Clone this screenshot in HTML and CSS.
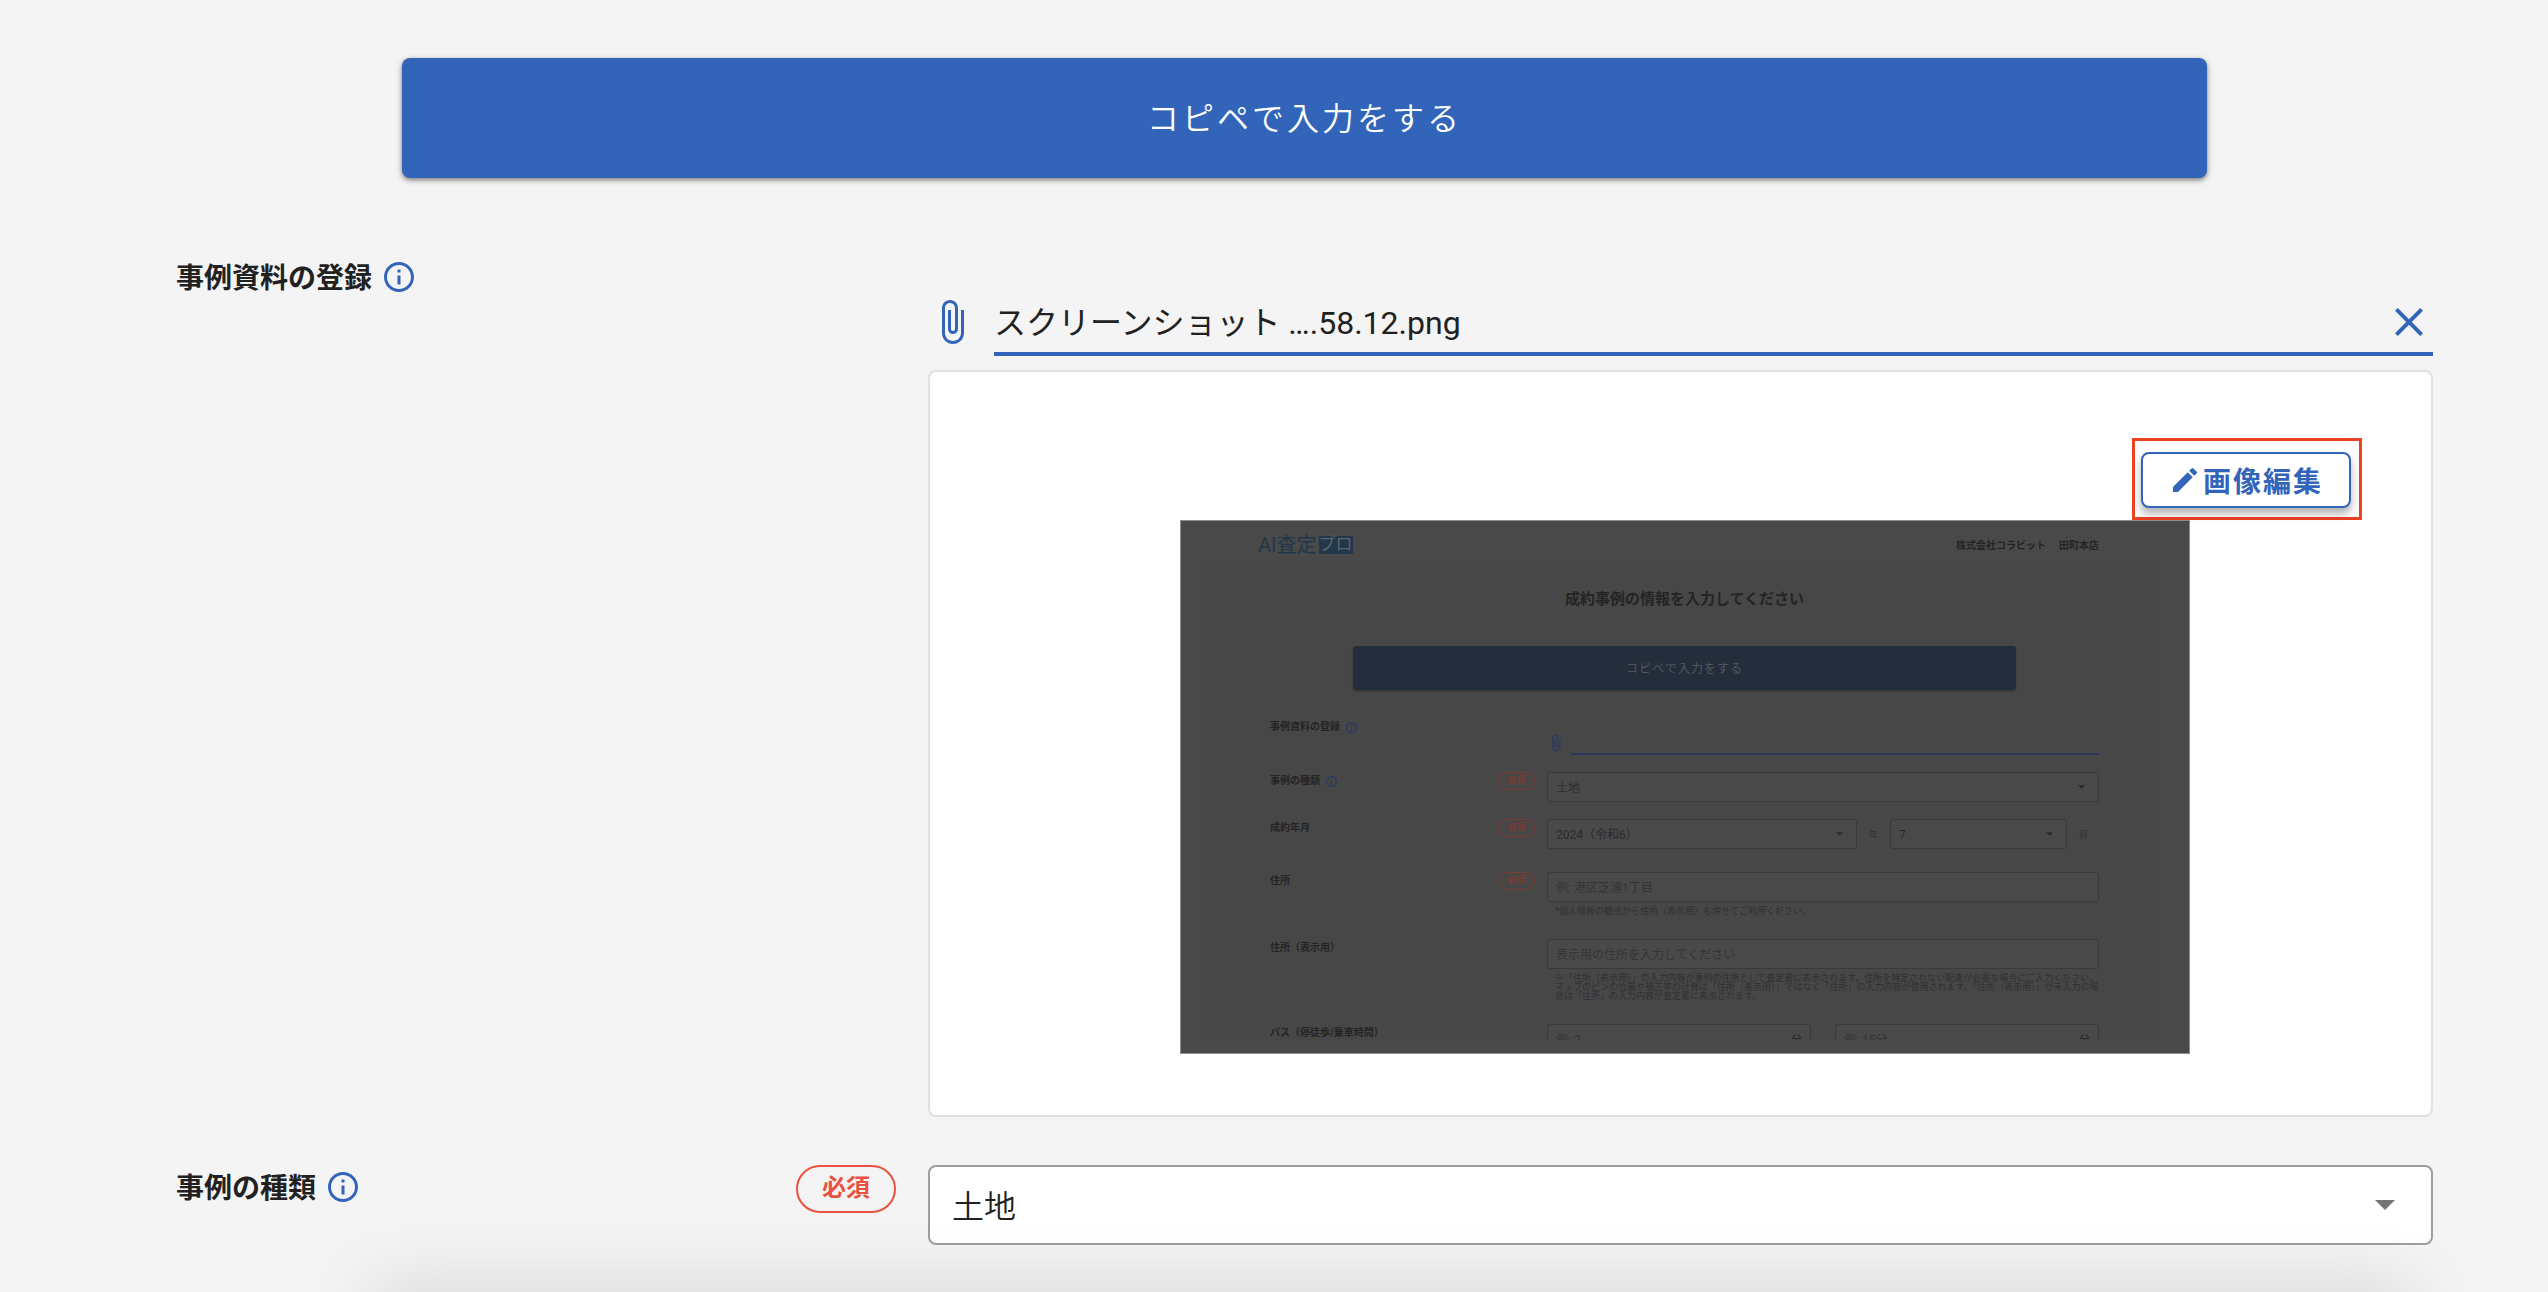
FILE: index.html
```html
<!DOCTYPE html>
<html lang="ja">
<head>
<meta charset="utf-8">
<meta name="viewport" content="width=device-width, initial-scale=1">
<title>成約事例の登録</title>
<link rel="stylesheet" href="styles.css">
</head>
<body>
<svg class="defs" aria-hidden="true">
  <symbol id="info" viewBox="0 0 24 24"><path d="M11 7h2v2h-2zm0 4h2v6h-2zm1-9C6.480 2 2 6.480 2 12s4.480 10 10 10 10-4.480 10-10S17.520 2 12 2zm0 18c-4.410 0-8-3.590-8-8s3.590-8 8-8 8 3.590 8 8-3.590 8-8 8z"/></symbol>
  <symbol id="clip" viewBox="0 0 24 24"><path d="M16.500 6v11.500c0 2.210-1.790 4-4 4s-4-1.790-4-4V5c0-1.380 1.120-2.500 2.500-2.500s2.500 1.120 2.500 2.500v10.500c0 .55-.45 1-1 1s-1-.45-1-1V6H10v9.500c0 1.380 1.120 2.500 2.500 2.500s2.500-1.120 2.500-2.500V5c0-2.210-1.790-4-4-4S7 2.790 7 5v12.500c0 3.040 2.460 5.500 5.500 5.500s5.500-2.460 5.500-5.500V6h-1.500z"/></symbol>
  <symbol id="close" viewBox="0 0 24 24"><path d="M19 6.410L17.590 5 12 10.590 6.410 5 5 6.410 10.590 12 5 17.590 6.410 19 12 13.410 17.590 19 19 17.590 13.410 12z"/></symbol>
  <symbol id="edit" viewBox="0 0 24 24"><path d="M3 17.250V21h3.750L17.810 9.940l-3.750-3.750L3 17.250zM20.710 7.040a.996.996 0 0 0 0-1.410l-2.340-2.340a.996.996 0 0 0-1.410 0l-1.830 1.830 3.750 3.750 1.830-1.830z"/></symbol>
  <symbol id="down" viewBox="0 0 20 10"><path d="M0 0h20L10 10z"/></symbol>
</svg>

<main class="page">
  <button class="paste-button" type="button">コピペで入力をする</button>

  <section class="row">
    <div class="row-head">
      <label class="row-label" for="file">事例資料の登録</label>
      <button class="icon-button" type="button" aria-label="事例資料の登録について"><svg class="info-icon"><use href="#info"/></svg></button>
    </div>
    <div class="upload">
      <div class="file">
        <svg class="clip-icon"><use href="#clip"/></svg>
        <div class="file-line">
          <input class="file-name" id="file" type="text" readonly value="スクリーンショット ….58.12.png">
          <button class="icon-button" type="button" aria-label="クリア"><svg class="close-icon"><use href="#close"/></svg></button>
        </div>
      </div>
      <div class="preview">
        <div class="highlight">
          <button class="edit-button" type="button"><svg class="edit-icon"><use href="#edit"/></svg>画像編集</button>
        </div>
        <div class="shot">
          <div class="shot-header">
            <div class="logo">AI査定<span class="logo-box">プロ</span></div>
            <div class="company"><span>株式会社コラビット</span><span>田町本店</span></div>
          </div>
          <div class="shot-body">
            <h2 class="shot-title">成約事例の情報を入力してください</h2>
            <button class="shot-paste" type="button">コピペで入力をする</button>
            <div class="shot-row shot-file-row">
              <div class="shot-head"><span class="shot-label">事例資料の登録</span><svg class="shot-info"><use href="#info"/></svg></div>
              <div class="shot-file"><svg class="shot-clip"><use href="#clip"/></svg><span class="shot-line"></span></div>
            </div>
            <div class="shot-row">
              <div class="shot-head"><label class="shot-label" for="s-kind">事例の種類</label><svg class="shot-info"><use href="#info"/></svg><span class="shot-badge">必須</span></div>
              <div class="shot-select"><select class="shot-control faint" id="s-kind"><option>土地</option></select><svg class="shot-arrow"><use href="#down"/></svg></div>
            </div>
            <div class="shot-row">
              <div class="shot-head"><label class="shot-label" for="s-year">成約年月</label><span class="shot-badge">必須</span></div>
              <div class="shot-date">
                <div class="shot-select"><select class="shot-control" id="s-year"><option>2024（令和6）</option></select><svg class="shot-arrow"><use href="#down"/></svg></div>
                <span class="shot-unit">年</span>
                <div class="shot-select"><select class="shot-control" aria-label="月"><option>7</option></select><svg class="shot-arrow"><use href="#down"/></svg></div>
                <span class="shot-unit">月</span>
              </div>
            </div>
            <div class="shot-row spaced">
              <div class="shot-head"><label class="shot-label" for="s-addr">住所</label><span class="shot-badge">必須</span></div>
              <div>
                <input class="shot-control" id="s-addr" type="text" placeholder="例: 港区芝浦1丁目">
                <p class="shot-note">*個人情報の観点から住所（表示用）も併せてご利用ください。</p>
              </div>
            </div>
            <div class="shot-row spaced">
              <div class="shot-head"><label class="shot-label" for="s-disp">住所（表示用）</label></div>
              <div>
                <input class="shot-control" id="s-disp" type="text" placeholder="表示用の住所を入力してください">
                <p class="shot-note">※「住所（表示用）」の入力内容が事例の住所として査定書に表示されます。住所を特定されない配慮が必要な場合にご入力ください。<br>マップのピンの位置や補正率の計算は「住所（表示用）」ではなく「住所」の入力内容が使用されます。「住所（表示用）」が未入力の場<br>合は「住所」の入力内容が査定書に表示されます。</p>
              </div>
            </div>
            <div class="shot-row spaced">
              <div class="shot-head"><label class="shot-label" for="s-bus">バス（停徒歩/乗車時間）</label></div>
              <div class="shot-bus">
                <div class="shot-select"><input class="shot-control" id="s-bus" type="text" placeholder="例: 2"><span class="shot-suffix">分</span></div>
                <div class="shot-select"><input class="shot-control" type="text" aria-label="乗車時間" placeholder="例: 15分"><span class="shot-suffix">分</span></div>
              </div>
            </div>
          </div>
        </div>
      </div>
    </div>
  </section>

  <section class="row">
    <div class="row-head">
      <label class="row-label" for="kind">事例の種類</label>
      <button class="icon-button" type="button" aria-label="事例の種類について"><svg class="info-icon"><use href="#info"/></svg></button>
      <span class="badge">必須</span>
    </div>
    <div class="select">
      <select class="select-control" id="kind"><option>土地</option></select>
      <svg class="select-arrow"><use href="#down"/></svg>
    </div>
  </section>
</main>
<div class="bottom-shadow"></div>
</body>
</html>
```
FILE: styles.css
```css
* { box-sizing: border-box; }

:root {
  --blue: #3265ba;
  --red: #e8523f;
}

html { background: #f4f4f4; }

body {
  margin: 0;
  color: #212121;
  font-family: Roboto, "Noto Sans CJK JP", sans-serif;
  font-size: 28px;
}

button, input, select { font-family: inherit; margin: 0; }

svg { display: block; flex: none; fill: currentColor; }

.defs { position: absolute; width: 0; height: 0; }

.page {
  display: flex;
  flex-direction: column;
  padding: 58px 115px 47px 176px;
}

.paste-button {
  align-self: center;
  width: 80%;
  height: 120px;
  margin-bottom: 77px;
  padding: 0 0 4px;
  border: 0;
  border-radius: 8px;
  background: var(--blue);
  box-shadow: 0 2px 4px rgba(0, 0, 0, .4), 0 2px 10px rgba(0, 0, 0, .14);
  color: #fff;
  font-size: 32px;
  font-weight: 350;
  letter-spacing: 3px;
}

.row {
  display: grid;
  grid-template-columns: 720fr 1505fr;
  column-gap: 32px;
  align-items: start;
}

.row + .row { margin-top: 48px; }

.row-head { display: flex; align-items: flex-start; }

.row-label {
  padding-top: 6px;
  margin-right: 9px;
  line-height: 36px;
  font-weight: 700;
}

.icon-button {
  padding: 0;
  border: 0;
  background: none;
  color: var(--blue);
}

.info-icon { width: 36px; height: 36px; margin-top: 4px; }

.badge {
  width: 100px;
  height: 48px;
  margin-left: auto;
  border: 2px solid var(--red);
  border-radius: 24px;
  color: var(--red);
  font-size: 24px;
  font-weight: 700;
  line-height: 43px;
  text-align: center;
}

.upload { min-width: 0; padding-top: 43px; }

.file { display: flex; gap: 18px; }

.clip-icon { width: 48px; height: 48px; color: var(--blue); }

.file-line {
  display: flex;
  flex: 1;
  height: 58px;
  border-bottom: 4px solid var(--blue);
}

.file-name {
  flex: 1;
  min-width: 0;
  height: 48px;
  padding: 0 0 5px;
  border: 0;
  outline: 0;
  background: none;
  color: inherit;
  font-size: 32px;
}

.close-icon { width: 48px; height: 48px; }
.file-line .icon-button { height: 48px; }

.preview {
  display: flex;
  flex-direction: column;
  align-items: center;
  margin-top: 14px;
  padding: 66px 69px 61px 78px;
  border: 2px solid #e0e0e0;
  border-radius: 8px;
  background: #fff;
}

.highlight {
  align-self: flex-end;
  padding: 11px 8px 9px 6px;
  border: 3px solid #ee4023;
}

.edit-button {
  display: flex;
  align-items: center;
  height: 56px;
  padding: 0 26px;
  border: 2px solid var(--blue);
  border-radius: 8px;
  background: #fff;
  box-shadow: 0 6px 8px rgba(0, 0, 0, .3);
  color: var(--blue);
  font-size: 28px;
  font-weight: 700;
  letter-spacing: 2px;
}

.edit-icon { width: 32px; height: 32px; margin-right: 2px; }

.select { display: grid; align-items: center; }
.select > * { grid-area: 1 / 1; }

.select-control {
  width: 100%;
  height: 80px;
  padding: 3px 22px 0;
  border: 2px solid #9e9e9e;
  border-radius: 8px;
  appearance: none;
  background: #fff;
  color: inherit;
  font-size: 32px;
  font-weight: 350;
}

.select-arrow {
  justify-self: end;
  width: 20px;
  height: 10px;
  margin-right: 38px;
  color: #757575;
  pointer-events: none;
}

.bottom-shadow {
  position: fixed;
  right: 140px;
  bottom: -28px;
  left: 376px;
  height: 20px;
  box-shadow: 0 0 72px 6px rgba(0, 0, 0, .2);
}

/* Darkened thumbnail of the uploaded image */
.shot {
  width: 100%;
  max-width: 1010px;
  padding: 5px 29px 13px 19px;
  border: 1px solid #8e8e8e;
  background: #494949;
  color: #242424;
  font-size: 10px;
}

.shot-header {
  display: flex;
  align-items: center;
  justify-content: space-between;
  height: 36px;
  padding: 0 61px 0 58px;
  border-top: 1px solid #424242;
}

.logo {
  display: flex;
  align-items: center;
  gap: 2px;
  color: #21384c;
  font-size: 20px;
  line-height: 18px;
}

.logo-box {
  width: 34px;
  height: 18px;
  background: #22374a;
  color: #5a656c;
  font-size: 17px;
  line-height: 17px;
}

.company { display: flex; gap: 13px; font-weight: 700; }

.shot-body {
  height: 478px;
  padding: 27px 61px 0 70px;
  overflow: hidden;
  background: #474747;
}

.shot-title {
  margin: 0 0 37px;
  font-size: 15px;
  font-weight: 700;
  line-height: 20px;
  text-align: center;
}

.shot-paste {
  display: block;
  width: 80%;
  height: 44px;
  margin: 0 auto 28px;
  padding: 0 0 1px;
  border: 0;
  border-radius: 3px;
  background: #242d3c;
  box-shadow: 0 1px 2px rgba(0, 0, 0, .3);
  color: #565b63;
  font-size: 12px;
  font-weight: 350;
  letter-spacing: 1px;
}

.shot-row {
  display: grid;
  grid-template-columns: 265fr 552fr;
  column-gap: 12px;
  align-items: start;
  margin-top: 17px;
}

.shot-row.spaced { margin-top: 23px; }

.shot-head { display: flex; align-items: center; height: 18px; }
.shot-label { font-weight: 700; line-height: 16px; white-space: nowrap; }
.shot-info { width: 13px; height: 13px; margin-left: 5px; color: #253a66; }

.shot-badge {
  width: 37px;
  height: 18px;
  margin-left: auto;
  border: 1px solid #7c3a32;
  border-radius: 9px;
  color: #7c3a32;
  font-size: 9px;
  font-weight: 700;
  line-height: 15px;
  text-align: center;
}

.shot-file-row { height: 37px; }
.shot-file { display: flex; height: 37px; align-items: flex-end; }
.shot-clip { width: 18px; height: 18px; margin-bottom: 3px; color: #253a66; }
.shot-line { flex: 1; margin-left: 6px; border-bottom: 2px solid #2b3a58; }

.shot-select { display: grid; align-items: center; flex: 1; min-width: 0; }
.shot-select > * { grid-area: 1 / 1; }

.shot-control {
  display: block;
  width: 100%;
  height: 30px;
  padding: 1px 8px 0;
  border: 1px solid #3a3a3a;
  border-radius: 3px;
  appearance: none;
  background: #494949;
  color: #2a2a2a;
  font-size: 12px;
}

.shot-control::placeholder { color: #353535; }
.shot-control.faint { color: #303030; }

.shot-arrow {
  justify-self: end;
  width: 7px;
  height: 4px;
  margin-right: 14px;
  color: #2a2a2a;
}

.shot-date {
  display: grid;
  grid-template-columns: 310fr 9px 177fr 9px;
  column-gap: 12px;
  align-items: center;
  padding-right: 11px;
}

.shot-unit { color: #333; font-size: 9px; }

.shot-note {
  margin: 5px 0 0 8px;
  color: #313131;
  font-size: 9px;
  line-height: 9px;
  white-space: nowrap;
}

.shot-bus { display: flex; gap: 24px; }
.shot-suffix { justify-self: end; margin-right: 9px; font-size: 11px; }
```
